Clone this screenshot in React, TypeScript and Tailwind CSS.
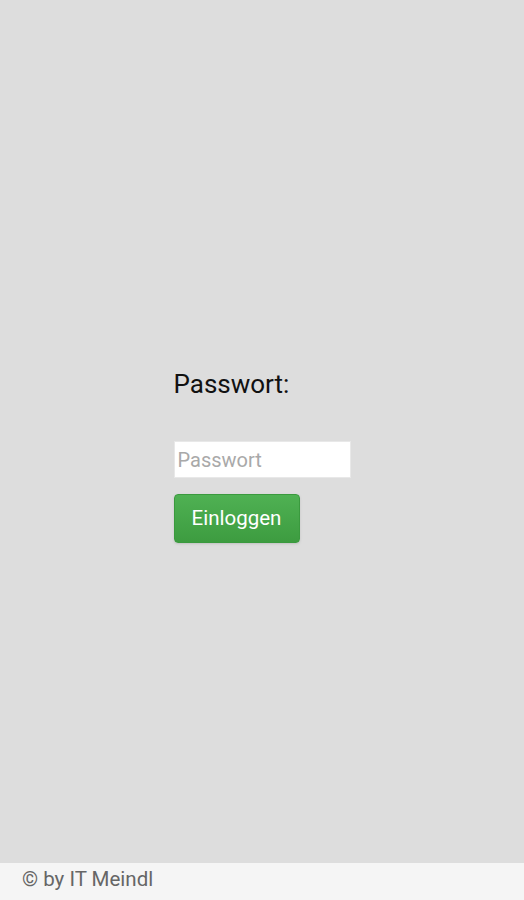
import React from 'react';

export default function App() {
  return (
    <div className="flex h-[900px] w-full flex-col bg-[#dddddd] font-['Roboto',sans-serif]">
      <main className="flex flex-1 justify-center pt-[369px]">
        <div className="flex w-[177px] flex-col">
          <label className="text-[26px] leading-[30px] text-[#111]">Passwort:</label>
          <input
            type="password"
            placeholder="Passwort"
            className="mt-[42px] h-[37px] w-[177px] border border-[#e8e8e8] bg-white px-[3px] text-[20px] text-[#333] outline-none placeholder:text-[#a9a9a9]"
          />
          <button className="mt-[16px] h-[49px] w-[126px] rounded-[4px] border border-[#3a9a3e] bg-gradient-to-b from-[#4fb153] to-[#3d9c40] text-[20.5px] text-white shadow-sm">
            Einloggen
          </button>
        </div>
      </main>
      <footer className="h-[37px] bg-[#f5f5f5] pl-[22px] pt-[2px] text-[20.5px] leading-[28px] text-[#666]">
        © by IT Meindl
      </footer>
    </div>
  );
}
